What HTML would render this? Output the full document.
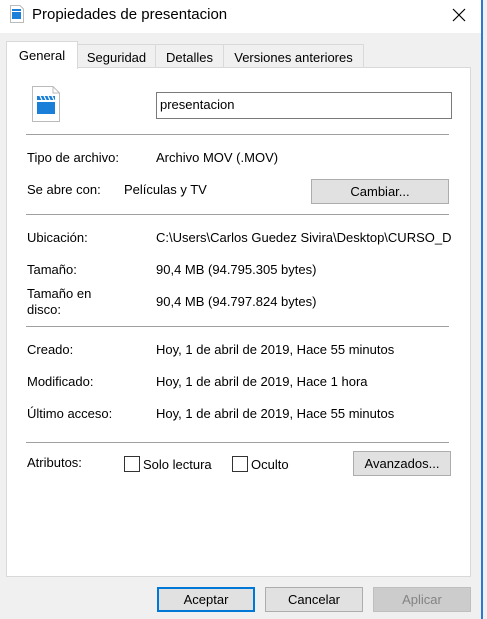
<!DOCTYPE html>
<html><head><meta charset="utf-8"><style>
body{margin:0;width:487px;height:619px;background:#f0f0f0;font-family:"Liberation Sans",sans-serif;font-size:13px;color:#000;position:relative;overflow:hidden}
.a{position:absolute;white-space:nowrap}
.title{left:0;top:0;width:481px;height:33px;background:#fff}
.rb{left:481px;top:0;width:2px;height:619px;background:#2b79d0}
.panel{left:6px;top:67px;width:463px;height:508px;background:#fff;border:1px solid #d9d9d9}
.tab{top:44px;height:22px;border:1px solid #d9d9d9;border-bottom:none;background:#f0f0f0;text-align:center;line-height:25px;font-size:13px}
.sep{left:26px;width:423px;height:1px;background:#a0a0a0}
.btn{height:23px;border:1px solid #adadad;background:#e1e1e1;text-align:center;line-height:23px;font-size:13px}
.cb{width:14px;height:14px;border:1px solid #333;background:#fff}
</style></head><body>
<div class="a title"></div>
<div class="a rb"></div>
<svg class="a" style="left:10px;top:5px" width="14" height="18" viewBox="0 0 14 18"><path d="M0.5 .5H10L13.5 4V17.5H.5Z" fill="#fff" stroke="#bbb"/><rect x="2" y="7" width="9" height="7" fill="#1a7fd8"/><rect x="2" y="4" width="9" height="2" fill="#1a7fd8"/></svg>
<div class="a" style="left:32px;top:6px;font-size:15px">Propiedades de presentacion</div>
<svg class="a" style="left:452px;top:8px" width="14" height="14"><path d="M1 1L13 13M13 1L1 13" stroke="#000" stroke-width="1.2"/></svg>
<div class="a panel"></div>
<div class="a tab" style="left:77px;width:77px">Seguridad</div>
<div class="a tab" style="left:155px;width:67px">Detalles</div>
<div class="a tab" style="left:223px;width:139px">Versiones anteriores</div>
<div class="a tab" style="left:6px;top:41px;height:27px;width:70px;background:#fff;line-height:28px">General</div>
<svg class="a" style="left:32px;top:86px" width="28" height="36" viewBox="0 0 28 36"><path d="M.5 .5H21L27.5 7V35.5H.5Z" fill="#fff" stroke="#bbb"/><path d="M21 .5V7H27.5" fill="none" stroke="#bbb"/><rect x="5" y="16" width="18" height="12" fill="#1a7fd8"/><rect x="5" y="10" width="18" height="4" fill="#1a7fd8"/><path d="M8 10l2 4M12 10l2 4M16 10l2 4M20 10l2 4" stroke="#fff" stroke-width="1.2"/></svg>
<div class="a" style="left:156px;top:92px;width:294px;height:25px;border:1px solid #7a7a7a;background:#fff;line-height:24px;font-size:13px;text-indent:3px">presentacion</div>
<div class="a sep" style="top:134px"></div>
<div class="a" style="left:27px;top:150px">Tipo de archivo:</div>
<div class="a" style="left:156px;top:150px">Archivo MOV (.MOV)</div>
<div class="a" style="left:27px;top:182px">Se abre con:</div>
<div class="a" style="left:124px;top:182px">Películas y TV</div>
<div class="a btn" style="left:311px;top:179px;width:136px">Cambiar...</div>
<div class="a sep" style="top:214px"></div>
<div class="a" style="left:27px;top:230px">Ubicación:</div>
<div class="a" style="left:156px;top:230px;width:295px;overflow:hidden">C:\Users\Carlos Guedez Sivira\Desktop\CURSO_DE</div>
<div class="a" style="left:27px;top:262px">Tamaño:</div>
<div class="a" style="left:156px;top:262px">90,4 MB (94.795.305 bytes)</div>
<div class="a" style="left:27px;top:286px;line-height:16px">Tamaño en<br>disco:</div>
<div class="a" style="left:156px;top:294px">90,4 MB (94.797.824 bytes)</div>
<div class="a sep" style="top:326px"></div>
<div class="a" style="left:27px;top:342px">Creado:</div>
<div class="a" style="left:156px;top:342px">Hoy, 1 de abril de 2019, Hace 55 minutos</div>
<div class="a" style="left:27px;top:374px">Modificado:</div>
<div class="a" style="left:156px;top:374px">Hoy, 1 de abril de 2019, Hace 1 hora</div>
<div class="a" style="left:27px;top:406px">Último acceso:</div>
<div class="a" style="left:156px;top:406px">Hoy, 1 de abril de 2019, Hace 55 minutos</div>
<div class="a sep" style="top:442px"></div>
<div class="a" style="left:27px;top:455px">Atributos:</div>
<div class="a cb" style="left:124px;top:456px"></div>
<div class="a" style="left:143px;top:457px;font-size:13px">Solo lectura</div>
<div class="a cb" style="left:232px;top:456px"></div>
<div class="a" style="left:251px;top:457px;font-size:13px">Oculto</div>
<div class="a btn" style="left:353px;top:451px;width:96px">Avanzados...</div>
<div class="a btn" style="left:157px;top:587px;width:94px;border:2px solid #0078d7;height:21px;line-height:21px">Aceptar</div>
<div class="a btn" style="left:265px;top:587px;width:96px">Cancelar</div>
<div class="a btn" style="left:373px;top:587px;width:96px;background:#cccccc;border-color:#bfbfbf;color:#838383">Aplicar</div>
</body></html>
